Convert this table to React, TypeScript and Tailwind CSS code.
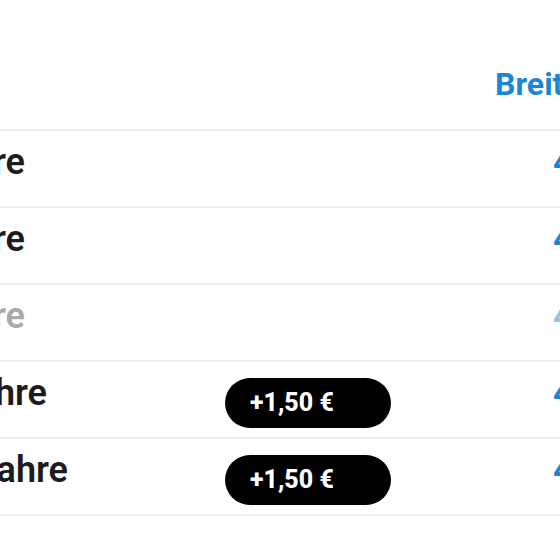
import React from 'react';

const rows = [
  { label: 'Kinder bis 3 Jahre', pad: 'pr-[43px]', extra: false, disabled: false },
  { label: 'Kinder 4 bis 6 Jahre', pad: 'pr-[43px]', extra: false, disabled: false },
  { label: 'Kinder 7 bis 9 Jahre', pad: 'pr-[43px]', extra: false, disabled: true },
  { label: 'Jugend 10 bis 13 Jahre', pad: 'pr-[21px]', extra: true, disabled: false },
  { label: 'Jugend 14 bis 17 Jahre', pad: 'pr-0', extra: true, disabled: false },
];

export default function App() {
  return (
    <div className="w-[560px] h-[560px] overflow-hidden bg-white font-['Roboto',sans-serif]">
      <div className="ml-[-332px] w-[1100px]">
        <div className="h-[131px] flex border-b-2 border-[#eeeeee]">
          <div className="w-[400px]" />
          <div className="w-[157px]" />
          <div className="w-[270px]" />
          <div className="pt-[65px] text-[32px] leading-[38px] font-bold text-[#1a86d6] whitespace-nowrap">
            Breitensport
          </div>
        </div>
        {rows.map((row) => (
          <div key={row.label} className="h-[77px] flex border-b-2 border-[#eeeeee]">
            <div
              className={`w-[400px] flex justify-end pt-[10px] text-[36px] leading-[43px] font-semibold whitespace-nowrap ${row.pad} ${
                row.disabled ? 'text-[#aaaaaa]' : 'text-[#1c1c1c]'
              }`}
            >
              {row.label}
            </div>
            <div className="w-[157px]" />
            <div className="w-[270px] pt-[16px]">
              {row.extra && (
                <span className="flex items-center w-[166px] h-[50px] rounded-full bg-black pl-[25px] text-white text-[25px] font-extrabold">
                  +1,50 €
                </span>
              )}
            </div>
            <div
              className={`pl-[58px] pt-[10px] text-[36px] leading-[43px] font-semibold whitespace-nowrap ${
                row.disabled ? 'text-[#8fc3ea]' : 'text-[#1a86d6]'
              }`}
            >
              4,50 €
            </div>
          </div>
        ))}
      </div>
    </div>
  );
}
